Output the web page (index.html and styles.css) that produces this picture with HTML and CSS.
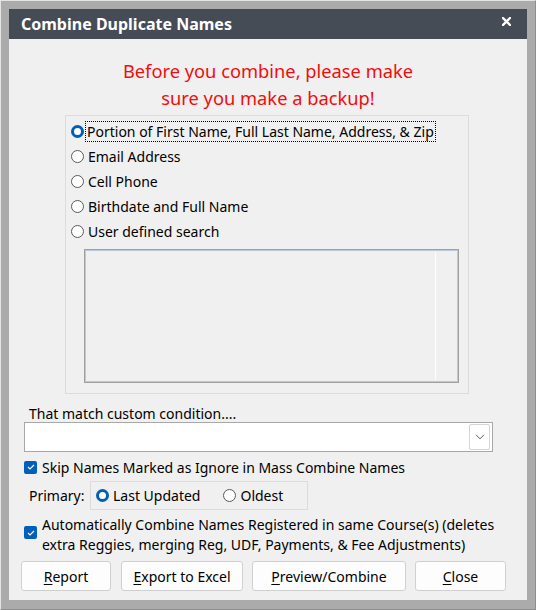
FILE: index.html
```html
<!DOCTYPE html>
<html lang="en">
<head>
<meta charset="utf-8">
<title>Combine Duplicate Names</title>
<link rel="stylesheet" href="styles.css">
</head>
<body>
<div class="frame">
  <div class="window">
    <div class="titlebar">
      <span class="title">Combine Duplicate Names</span>
      <svg class="close" width="9" height="9" viewBox="0 0 9 9"><path d="M1 1 L8 8 M8 1 L1 8" stroke="#fff" stroke-width="2.3" stroke-linecap="square"/></svg>
    </div>
    <div class="client">
      <p class="warning">Before you combine, please make<br>sure you make a backup!</p>

      <div class="group">
        <label class="radio-row"><span class="radio checked"></span><span class="focus">Portion of First Name, Full Last Name, Address, &amp; Zip</span></label>
        <label class="radio-row"><span class="radio"></span><span>Email Address</span></label>
        <label class="radio-row"><span class="radio"></span><span>Cell Phone</span></label>
        <label class="radio-row"><span class="radio"></span><span>Birthdate and Full Name</span></label>
        <label class="radio-row"><span class="radio"></span><span>User defined search</span></label>
        <div class="listbox"><div class="listbox-col"></div></div>
      </div>

      <div class="cond-label">That match custom condition....</div>
      <div class="combo">
        <div class="combo-btn">
          <svg width="10" height="6" viewBox="0 0 10 6"><path d="M1 0.8 L5 4.8 L9 0.8" fill="none" stroke="#555" stroke-width="1"/></svg>
        </div>
      </div>

      <label class="check-row">
        <span class="checkbox"><svg width="8" height="6" viewBox="0 0 8 6"><path d="M1 3 L3 5 L7 1" fill="none" stroke="#fff" stroke-width="1.1"/></svg></span>
        <span>Skip Names Marked as Ignore in Mass Combine Names</span>
      </label>

      <div class="primary-row">
        <span class="primary-label">Primary:</span>
        <div class="primary-box">
          <label class="radio-inline"><span class="radio checked"></span><span>Last Updated</span></label>
          <label class="radio-inline"><span class="radio"></span><span>Oldest</span></label>
        </div>
      </div>

      <label class="check-row auto">
        <span class="checkbox"><svg width="8" height="6" viewBox="0 0 8 6"><path d="M1 3 L3 5 L7 1" fill="none" stroke="#fff" stroke-width="1.1"/></svg></span>
        <span>Automatically Combine Names Registered in same Course(s) (deletes extra Reggies, merging Reg, UDF, Payments, &amp; Fee Adjustments)</span>
      </label>

      <div class="buttons">
        <button class="btn btn-report"><u>R</u>eport</button>
        <button class="btn btn-export"><u>E</u>xport to Excel</button>
        <button class="btn btn-preview"><u>P</u>review/Combine</button>
        <button class="btn btn-close"><u>C</u>lose</button>
      </div>
    </div>
  </div>
</div>
</body>
</html>
```

FILE: styles.css
```css
html, body {
  margin: 0;
  padding: 0;
}

body {
  width: 536px;
  height: 610px;
  overflow: hidden;
  background: #ababab;
  font-family: "Noto Sans", "Segoe UI", sans-serif;
  font-size: 14px;
  color: #000;
}

/* outer window chrome */
.frame {
  box-sizing: border-box;
  width: 536px;
  height: 610px;
  border-top: 1px solid #e4e4e4;
  border-left: 1px solid #e4e4e4;
  border-right: 1px solid #8e8e8e;
  border-bottom: 1px solid #8e8e8e;
  padding: 8px 8px 9px 8px;
  background: #ababab;
}

.window {
  width: 518px;
  height: 591px;
  background: #f0f0f0;
  display: flex;
  flex-direction: column;
}

.titlebar {
  height: 30px;
  flex: none;
  background: #454c55;
  display: flex;
  align-items: center;
  justify-content: space-between;
  padding: 0 16px 0 12px;
}

.title {
  color: #fff;
  font-weight: bold;
  font-size: 16px;
}

.close {
  display: block;
  margin-top: -6px;
}

.client {
  flex: 1;
}

.warning {
  margin: 18px 0 0 0;
  text-align: center;
  color: #f20d0d;
  font-size: 18.3px;
  line-height: 27px;
}

/* search-type group */
.group {
  box-sizing: border-box;
  margin: 4px 0 0 56px;
  width: 404px;
  height: 279px;
  border: 1px solid #dcdcdc;
  padding: 3px 0 0 5px;
}

.radio-row {
  display: flex;
  align-items: center;
  height: 25px;
  gap: 4px;
}

.radio {
  box-sizing: border-box;
  width: 13px;
  height: 13px;
  border-radius: 50%;
  border: 1px solid #5a5a5a;
  background: #fff;
  flex: none;
}

.radio.checked {
  border: 3.5px solid #005fb8;
  background: #fff;
}

.focus {
  outline: 1px dotted #000;
  padding: 0 1px;
  margin-left: -2px;
}

.listbox {
  box-sizing: border-box;
  margin: 5px 0 0 13px;
  width: 375px;
  height: 134px;
  border: 1px solid #a0a0a0;
  box-shadow: inset 0 0 0 1px #bcc9da;
  display: flex;
  justify-content: flex-end;
}

.listbox-col {
  width: 22px;
  margin: 2px 0;
  border-left: 1px solid #fff;
}

.cond-label {
  margin: 12px 0 0 20px;
  line-height: 16px;
}

.combo {
  box-sizing: border-box;
  margin: 0 0 0 15px;
  width: 469px;
  height: 30px;
  background: #fff;
  border: 1px solid #a8a8a8;
  display: flex;
  justify-content: flex-end;
  align-items: center;
  padding-right: 2px;
}

.combo-btn {
  box-sizing: border-box;
  width: 21px;
  height: 26px;
  border: 1px solid #d4d4d4;
  border-radius: 2px;
  display: flex;
  align-items: center;
  justify-content: center;
}

.check-row {
  display: flex;
  align-items: center;
  gap: 5px;
  margin: 2px 0 0 15px;
  height: 26px;
}

.checkbox {
  box-sizing: border-box;
  width: 13px;
  height: 13px;
  border-radius: 2px;
  background: #005fb8;
  display: flex;
  align-items: center;
  justify-content: center;
  flex: none;
}

.primary-row {
  display: flex;
  align-items: center;
  margin: 1px 0 0 20px;
}

.primary-label {
  width: 61px;
}

.primary-box {
  box-sizing: border-box;
  width: 218px;
  height: 29px;
  border: 1px solid #dcdcdc;
  display: flex;
  align-items: center;
  padding-left: 5px;
  gap: 23px;
}

.radio-inline {
  display: flex;
  align-items: center;
  gap: 4px;
}

.check-row.auto {
  align-items: flex-start;
  height: auto;
  margin-top: 5px;
  line-height: 20px;
}

.check-row.auto .checkbox {
  margin-top: 11px;
}

.buttons {
  display: flex;
  margin: 6px 0 0 12px;
}

.btn {
  box-sizing: border-box;
  height: 30px;
  background: #fdfdfd;
  border: 1px solid #d0d0d0;
  border-radius: 3px;
  font-family: inherit;
  font-size: 14px;
  color: #000;
  padding: 0;
}

.btn u {
  text-underline-offset: 2px;
}

.btn-report { width: 90px; }
.btn-export { width: 122px; margin-left: 10px; }
.btn-preview { width: 154px; margin-left: 9px; }
.btn-close { width: 91px; margin-left: 9px; }
```
